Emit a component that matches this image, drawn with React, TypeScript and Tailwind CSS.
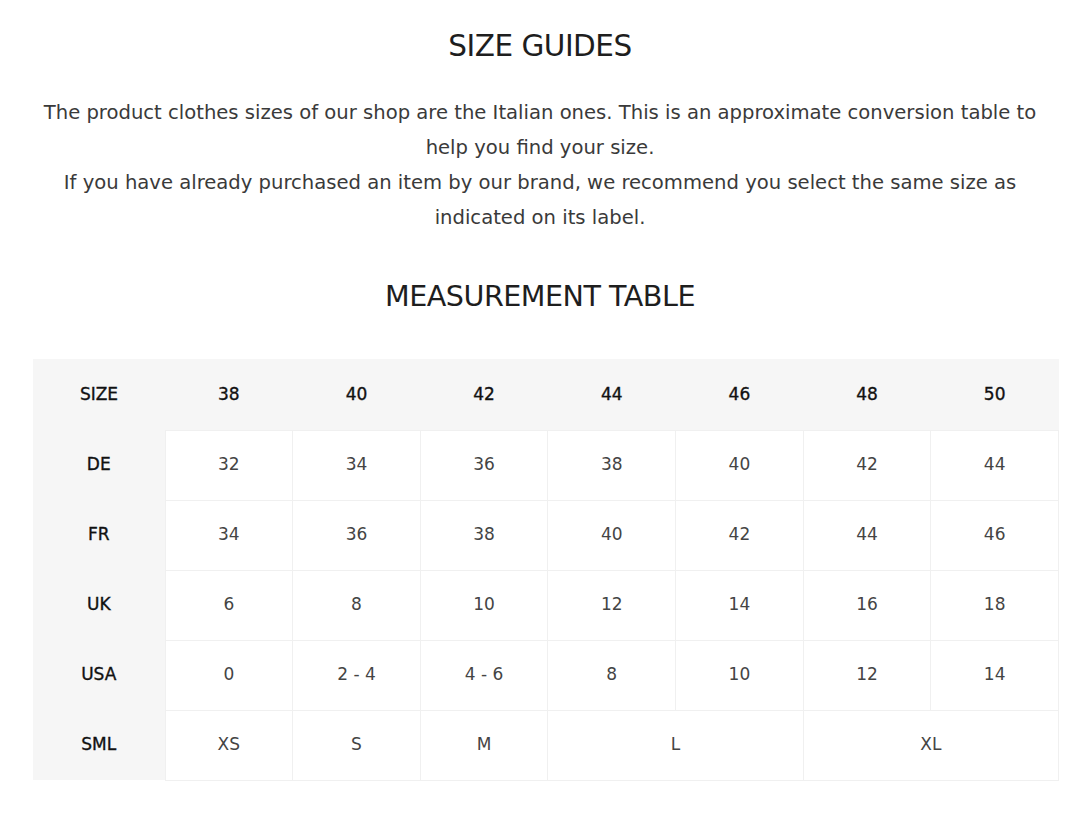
import React from "react";

const headers = ["38", "40", "42", "44", "46", "48", "50"];

const rows: { label: string; cells: string[] }[] = [
  { label: "DE", cells: ["32", "34", "36", "38", "40", "42", "44"] },
  { label: "FR", cells: ["34", "36", "38", "40", "42", "44", "46"] },
  { label: "UK", cells: ["6", "8", "10", "12", "14", "16", "18"] },
  { label: "USA", cells: ["0", "2 - 4", "4 - 6", "8", "10", "12", "14"] },
];

const font = { fontFamily: "'DejaVu Sans', 'Liberation Sans', sans-serif" };

export default function App() {
  return (
    <div className="w-[1080px] min-h-[816px] bg-white text-[#3a3a3a]" style={font}>
      <div className="mx-[33px] pt-[26px]">
        <h1 className="text-center text-[29.5px] leading-[40px] text-[#1e1e1e] tracking-[-0.5px]">SIZE GUIDES</h1>

        <p className="mt-[29px] text-center text-[19.6px] leading-[35px]">
          The product clothes sizes of our shop are the Italian ones. This is an approximate conversion table to
          <br />
          help you find your size.
          <br />
          If you have already purchased an item by our brand, we recommend you select the same size as
          <br />
          indicated on its label.
        </p>

        <h2 className="mt-[41px] text-center text-[28.6px] leading-[40px] text-[#1e1e1e] tracking-[-0.5px]">MEASUREMENT TABLE</h2>

        {/* size conversion table */}
        <table className="mt-[43px] w-[1026px] table-fixed border-collapse text-[17px]">
          <colgroup>
            <col className="w-[132px]" />
            {headers.map((h) => (
              <col key={h} />
            ))}
          </colgroup>
          <thead>
            <tr className="h-[71px] bg-[#f6f6f6]">
              <th className="font-normal text-[#111] [-webkit-text-stroke:0.35px]">SIZE</th>
              {headers.map((h) => (
                <th key={h} className="font-normal text-[#111] [-webkit-text-stroke:0.35px]">{h}</th>
              ))}
            </tr>
          </thead>
          <tbody>
            {rows.map((r) => (
              <tr key={r.label} className="h-[70px]">
                <td className="bg-[#f6f6f6] text-center text-[#111] [-webkit-text-stroke:0.35px]">{r.label}</td>
                {r.cells.map((c, i) => (
                  <td key={i} className="border border-[#f0f0f0] text-center text-[#444]">{c}</td>
                ))}
              </tr>
            ))}
            <tr className="h-[70px]">
              <td className="bg-[#f6f6f6] text-center text-[#111] [-webkit-text-stroke:0.35px]">SML</td>
              <td className="border border-[#f0f0f0] text-center text-[#444]">XS</td>
              <td className="border border-[#f0f0f0] text-center text-[#444]">S</td>
              <td className="border border-[#f0f0f0] text-center text-[#444]">M</td>
              <td colSpan={2} className="border border-[#f0f0f0] text-center text-[#444]">L</td>
              <td colSpan={2} className="border border-[#f0f0f0] text-center text-[#444]">XL</td>
            </tr>
          </tbody>
        </table>
      </div>
    </div>
  );
}
